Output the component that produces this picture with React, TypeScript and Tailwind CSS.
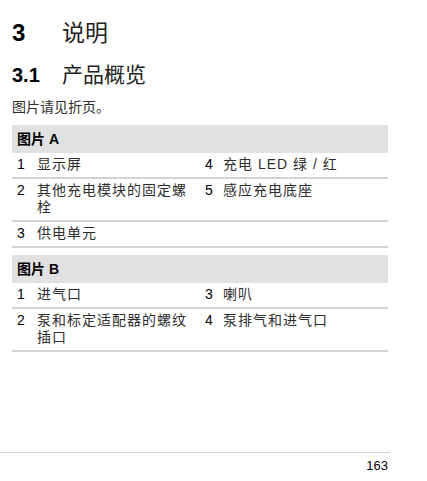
import React from "react";

const FONT = '"Liberation Sans", Arial, "Noto Sans CJK SC", sans-serif';

type Item = { n: string; t: string };
type Row = [Item, Item | null];

const tableA: Row[] = [
  [{ n: "1", t: "显示屏" }, { n: "4", t: "充电 LED 绿 / 红" }],
  [{ n: "2", t: "其他充电模块的固定螺栓" }, { n: "5", t: "感应充电底座" }],
  [{ n: "3", t: "供电单元" }, null],
];

const tableB: Row[] = [
  [{ n: "1", t: "进气口" }, { n: "3", t: "喇叭" }],
  [{ n: "2", t: "泵和标定适配器的螺纹插口" }, { n: "4", t: "泵排气和进气口" }],
];

function Cell({ item, first }: { item: Item | null; first: boolean }) {
  if (!item) return <div />;
  return (
    <div className="flex pl-[5px] pt-[3px] pb-[4px] leading-[17px] text-[14px]">
      <span className={`${first ? "w-[20px]" : "w-[18px]"} shrink-0 text-black`}>{item.n}</span>
      <span className={`tracking-[1px] text-[#2e2e2e] ${first ? "w-[160px]" : "w-[165px]"}`}>{item.t}</span>
    </div>
  );
}

function Table({ title, rows, className }: { title: string; rows: Row[]; className?: string }) {
  return (
    <div className={`w-[376px] ${className ?? ""}`}>
      <div className="h-[28px] bg-[#e1e1e1] flex items-center pl-[5px] text-[14px] font-bold text-black">
        {title}
      </div>
      {rows.map((r, i) => (
        <div key={i} className="grid grid-cols-[188px_1fr] border-b-2 border-[#d3d3d3]">
          <Cell item={r[0]} first />
          <Cell item={r[1]} first={false} />
        </div>
      ))}
    </div>
  );
}

export default function App() {
  return (
    <div className="w-[427px] h-[481px] bg-white flex flex-col" style={{ fontFamily: FONT }}>
      <div className="pl-[12px] pt-[18px]">
        <div className="flex h-[30px] items-center leading-[30px]">
          <span className="w-[50px] text-[24px] font-bold text-black">3</span>
          <span className="text-[23px] text-[#222]">说明</span>
        </div>
        <div className="flex h-[26px] mt-[14px] items-center leading-[26px]">
          <span className="w-[50px] text-[20px] font-bold text-black">3.1</span>
          <span className="text-[21px] text-[#222]">产品概览</span>
        </div>
        <p className="mt-[9px] h-[20px] leading-[20px] text-[14px] text-[#2e2e2e]">
          图片请见折页。
        </p>
        <Table title="图片 A" rows={tableA} className="mt-[8px]" />
        <Table title="图片 B" rows={tableB} className="mt-[7px]" />
      </div>
      <div className="mt-auto w-[390px] border-t border-[#d6d6d6] pt-[5px] pb-[7px] pr-[2px] text-right text-[13px] leading-[16px] text-black">
        163
      </div>
    </div>
  );
}
